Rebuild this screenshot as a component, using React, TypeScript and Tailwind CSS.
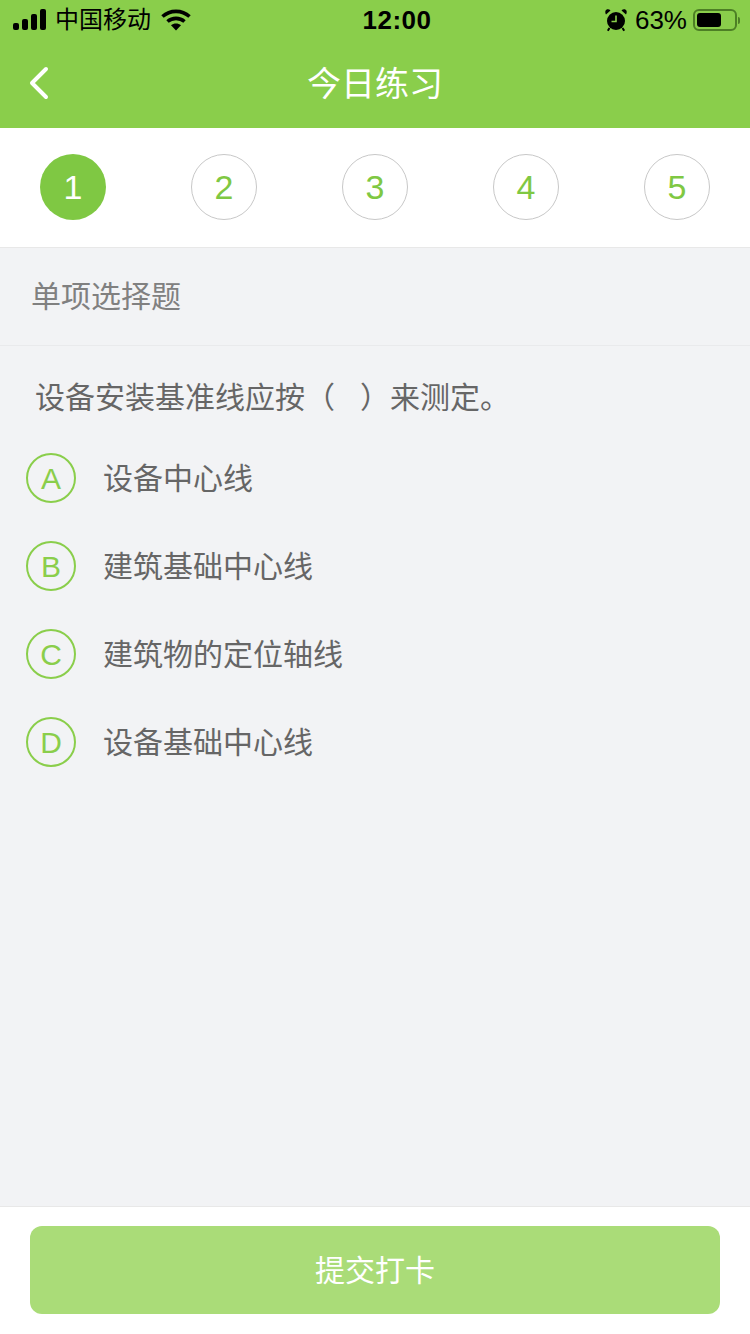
const font = { fontFamily: '"Liberation Sans", "Noto Sans CJK SC", sans-serif' };

function Signal() {
  return (
    <svg width="34" height="22" viewBox="0 0 34 22" fill="#000">
      <rect x="0" y="14" width="6" height="7" rx="2" />
      <rect x="9" y="10" width="6" height="11" rx="2" />
      <rect x="18" y="5" width="6" height="16" rx="2" />
      <rect x="27" y="0" width="6" height="21" rx="2" />
    </svg>
  );
}

function Wifi() {
  return (
    <svg width="30" height="22" viewBox="0 0 30 22" fill="none" stroke="#000" strokeWidth="3.6">
      <path d="M1.5 7.5C9 .6 21 .6 28.5 7.5" />
      <path d="M6.5 12.5c4.8-4.2 12.2-4.2 17 0" />
      <path d="M15 21.5l-5-5.2c2.800-2.300 7.200-2.300 10 0z" fill="#000" stroke="none" />
    </svg>
  );
}

function Alarm() {
  return (
    <svg width="22" height="24" viewBox="0 0 22 24" fill="#000">
      <circle cx="11" cy="13" r="9" />
      <path d="M1 6.500 5.500 2.500C4 .8 1 1 .4 3c-.3 1.300 0 2.500.6 3.500zM21 6.500 16.500 2.500C18 .8 21 1 21.600 3c.3 1.300 0 2.500-.6 3.500z" />
      <path d="M4.500 20 2.800 22.800M17.500 20l1.700 2.800" stroke="#000" strokeWidth="2" />
      <path d="M11 7.500V13.500H6.500" stroke="#8ace4b" strokeWidth="1.600" fill="none" />
    </svg>
  );
}

function Battery() {
  return (
    <div className="flex items-center">
      <div className="w-[44px] h-[22px] rounded-[6px] border-2 border-[#4d7f25] p-[2px] flex">
        <div className="w-[24px] h-full rounded-[3px] bg-black" />
      </div>
      <div className="w-[2px] h-[7px] ml-[1px] rounded-r-sm bg-[#4d7f25]" />
    </div>
  );
}

function Options({ letter, text }: { letter: string; text: string }) {
  return (
    <div className="h-[88px] flex items-center pl-[26px]">
      <div className="w-[50px] h-[50px] rounded-full border-2 border-[#8ace4b] flex items-center justify-center text-[30px] text-[#8ace4b] font-light">
        {letter}
      </div>
      <div className="ml-[27px] text-[30px] text-[#666666]">{text}</div>
    </div>
  );
}

export default function App() {
  return (
    <div className="w-[750px] h-[1334px] flex flex-col bg-[#f2f3f5] overflow-hidden" style={font}>
      <div className="h-[128px] bg-[#8ace4b] flex flex-col shrink-0">
        <div className="h-[40px] flex items-center justify-between pl-[13px] pr-[10px] text-black">
          <div className="flex items-center">
            <Signal />
            <span className="ml-[8px] text-[24px] leading-none">中国移动</span>
            <span className="ml-[10px] flex"><Wifi /></span>
          </div>
          <div className="text-[26px] font-bold leading-none tracking-[0.5px] ml-[-2px]">12:00</div>
          <div className="flex items-center">
            <Alarm />
            <span className="ml-[8px] text-[26px] leading-none">63%</span>
            <span className="ml-[6px] flex"><Battery /></span>
          </div>
        </div>
        <div className="relative flex-1 flex items-center justify-center">
          <svg className="absolute left-[28px] top-[26px]" width="22" height="34" viewBox="0 0 22 34" fill="none" stroke="#fff" strokeWidth="4" strokeLinecap="round" strokeLinejoin="round">
            <path d="M18 3 4 17l14 14" />
          </svg>
          <span className="text-[34px] text-white leading-none mt-[-1px]">今日练习</span>
        </div>
      </div>

      <div className="h-[120px] bg-white border-b border-[#e8e8e8] flex items-center justify-between pl-[40px] pr-[40px] pb-[1px] shrink-0">
        <div className="w-[66px] h-[66px] rounded-full bg-[#7fc843] flex items-center justify-center text-[34px] text-white font-light">1</div>
        {["2", "3", "4", "5"].map((n) => (
          <div key={n} className="w-[66px] h-[66px] rounded-full border border-[#c8c8c8] flex items-center justify-center text-[34px] text-[#7fc843]">
            {n}
          </div>
        ))}
      </div>

      <div className="h-[98px] border-b border-[#e9eaec] flex items-center pl-[31px] text-[30px] text-[#808080] shrink-0">单项选择题</div>

      <div className="h-[88px] flex items-center pl-[35px] text-[30px] text-[#666666] mt-[7px] mb-[-7px] shrink-0 whitespace-pre">设备安装基准线应按（   ）来测定。</div>

      <div className="flex-1 mt-[0px]">
        <Options letter="A" text="设备中心线" />
        <Options letter="B" text="建筑基础中心线" />
        <Options letter="C" text="建筑物的定位轴线" />
        <Options letter="D" text="设备基础中心线" />
      </div>

      <div className="h-[128px] bg-white border-t border-[#e8e8e8] pt-[19px] px-[30px] shrink-0">
        <div className="h-[88px] rounded-[12px] bg-[#aadc78] flex items-center justify-center text-[30px] text-white">提交打卡</div>
      </div>
    </div>
  );
}
